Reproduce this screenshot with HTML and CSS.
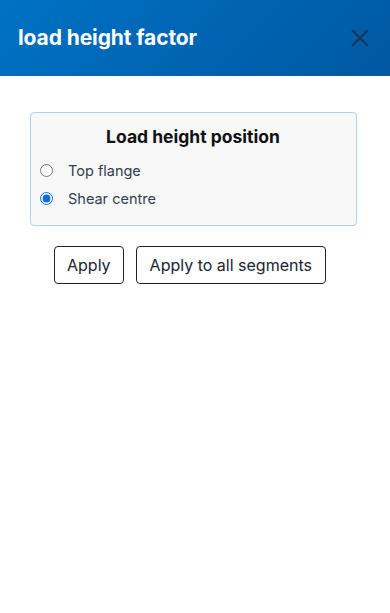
FILE: index.html
```html
<!DOCTYPE html>
<html>
<head>
<meta charset="utf-8">
<link rel="stylesheet" href="styles.css">
</head>
<body>
<header class="header">
  <h1 class="title">load height factor</h1>
  <button class="close" aria-label="Close">
    <svg width="18" height="18" viewBox="0 0 18 18"><path d="M1 1L17 17M17 1L1 17" stroke="#16365a" stroke-width="2" fill="none"/></svg>
  </button>
</header>
<main class="content">
  <section class="card">
    <h2 class="card-title">Load height position</h2>
    <label class="option"><input type="radio" name="pos" class="radio"><span>Top flange</span></label>
    <label class="option"><input type="radio" name="pos" class="radio" checked><span>Shear centre</span></label>
  </section>
  <div class="actions">
    <button class="btn">Apply</button>
    <button class="btn btn-wide">Apply to all segments</button>
  </div>
</main>
</body>
</html>
```
FILE: styles.css
```css
html, body {
  margin: 0;
  padding: 0;
  background: #fff;
  font-family: Inter, "Noto Sans", sans-serif;
}
.header {
  height: 76px;
  background: linear-gradient(135deg, #0072c4 0%, #0062b0 60%, #0058a0 100%);
  display: flex;
  align-items: center;
  justify-content: space-between;
  padding: 0 21px 0 18px;
  box-sizing: border-box;
}
.title {
  margin: 0;
  color: #fff;
  font-size: 21px;
  font-weight: 700;
  letter-spacing: -0.1px;
  padding-bottom: 2px;
}
.close {
  background: none;
  border: none;
  padding: 0;
  width: 18px;
  height: 18px;
  display: flex;
}
.content {
  padding: 36px 33px 0 30px;
}
.card {
  border: 1px solid #a6d3f7;
  border-radius: 4px;
  background: #f8f8f8;
  padding: 13px 10px 12px 9px;
  height: 114px;
  box-sizing: border-box;
}
.card-title {
  margin: 0 0 8px 0;
  text-align: center;
  font-size: 17.5px;
  font-weight: 700;
  color: #111;
  line-height: 22px;
}
.option {
  display: flex;
  align-items: center;
  height: 28px;
  font-size: 14.5px;
  color: #333e4e;
}
.radio {
  margin: 0 15px 0 0;
  width: 13px;
  height: 13px;
  accent-color: #0a6fdc;
}
.actions {
  display: flex;
  justify-content: center;
  gap: 12px;
  margin-top: 20px;
  padding-right: 7px;
}
.btn {
  height: 38px;
  border: 1px solid #222;
  border-radius: 4px;
  background: #fff;
  font-family: Inter, "Noto Sans", sans-serif;
  font-size: 16px;
  color: #1a2433;
  padding: 0 12px;
}
.btn-wide {
  padding: 0 13px;
}
```
